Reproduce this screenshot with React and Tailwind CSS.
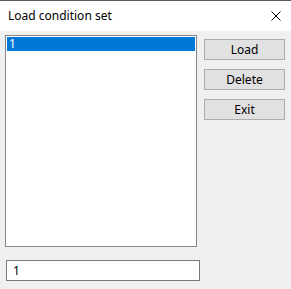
export default function App() {
  return (
    <div
      className="w-[291px] h-[289px] bg-[#f0f0f0] flex flex-col border-t border-[#5a5a5a] text-[12px] text-black"
      style={{ fontFamily: '"Noto Sans", "Liberation Sans", sans-serif' }}
    >
      {/* Title bar */}
      <div className="h-[30px] bg-white flex items-center justify-between pl-[8px] pr-[10px] shrink-0">
        <span className="leading-none">Load condition set</span>
        <svg width="10" height="10" viewBox="0 0 10 10">
          <path d="M0.5 0.5 L9.5 9.5 M9.5 0.5 L0.5 9.5" stroke="#000" strokeWidth="1" fill="none" />
        </svg>
      </div>

      {/* Body */}
      <div className="flex pt-[4px] pl-[5px]">
        <div className="flex flex-col w-[195px]">
          <div className="w-[192px] h-[212px] bg-white border border-[#828790] p-[1px]">
            <div className="h-[14px] bg-[#0078d7] text-white pl-[2px] leading-[14px]">1</div>
          </div>
          <input
            readOnly
            value="1"
            className="mt-[13px] ml-[1px] w-[194px] h-[21px] bg-white border border-[#7a7a7a] px-[6px] text-[12px] outline-none"
          />
        </div>
        <div className="flex flex-col gap-[9px] ml-[4px] pt-[4px]">
          {["Load", "Delete", "Exit"].map((label) => (
            <button
              key={label}
              className="w-[81px] h-[21px] bg-[#e1e1e1] border border-[#adadad] leading-none"
            >
              {label}
            </button>
          ))}
        </div>
      </div>
    </div>
  );
}
